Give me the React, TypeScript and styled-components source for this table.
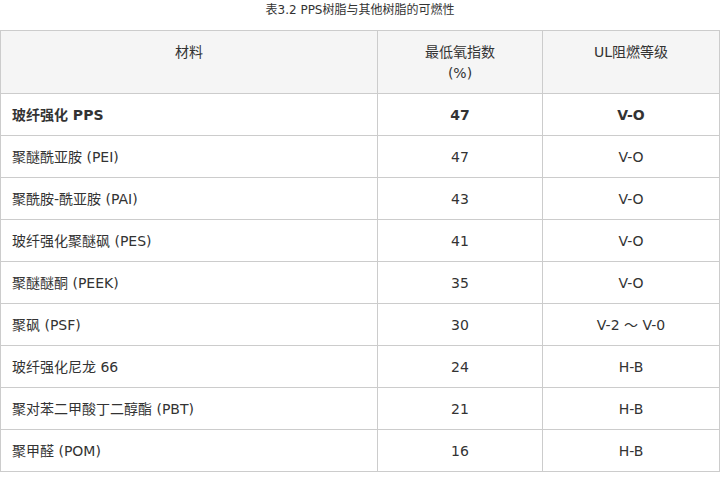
import React from "react";
import styled, { createGlobalStyle } from "styled-components";

const GlobalStyle = createGlobalStyle`
  body {
    margin: 0;
    background: #fff;
    font-family: "DejaVu Sans", "Noto Sans CJK SC", sans-serif;
    color: #333;
  }
`;

interface Row {
  name: string;
  oxygen: string;
  grade: string;
  strong?: boolean;
}

const rows: Row[] = [
  { name: "玻纤强化 PPS", oxygen: "47", grade: "V-O", strong: true },
  { name: "聚醚酰亚胺 (PEI)", oxygen: "47", grade: "V-O" },
  { name: "聚酰胺-酰亚胺 (PAI)", oxygen: "43", grade: "V-O" },
  { name: "玻纤强化聚醚砜 (PES)", oxygen: "41", grade: "V-O" },
  { name: "聚醚醚酮 (PEEK)", oxygen: "35", grade: "V-O" },
  { name: "聚砜 (PSF)", oxygen: "30", grade: "V-2 ～ V-0" },
  { name: "玻纤强化尼龙 66", oxygen: "24", grade: "H-B" },
  { name: "聚对苯二甲酸丁二醇酯 (PBT)", oxygen: "21", grade: "H-B" },
  { name: "聚甲醛 (POM)", oxygen: "16", grade: "H-B" },
];

function App() {
  return (
    <Page>
      <GlobalStyle />
      <Caption>表3.2 PPS树脂与其他树脂的可燃性</Caption>
      <Table>
        <colgroup>
          <col style={{ width: 377 }} />
          <col style={{ width: 165 }} />
          <col style={{ width: 177 }} />
        </colgroup>
        <thead>
          <tr>
            <HeadCell>材料</HeadCell>
            <HeadCell>
              最低氧指数
              <br />
              (%)
            </HeadCell>
            <HeadCell>UL阻燃等级</HeadCell>
          </tr>
        </thead>
        <tbody>
          {rows.map((r) => (
            <tr key={r.name}>
              <Cell $strong={r.strong}>{r.name}</Cell>
              <Cell $center $strong={r.strong}>
                {r.oxygen}
              </Cell>
              <Cell $center $strong={r.strong}>
                {r.grade}
              </Cell>
            </tr>
          ))}
        </tbody>
      </Table>
    </Page>
  );
}

const Page = styled.div`
  width: 720px;
`;

const Caption = styled.div`
  height: 30px;
  padding-top: 1px;
  box-sizing: border-box;
  text-align: center;
  font-size: 12px;
  line-height: 18px;
  color: #333;
`;

const Table = styled.table`
  width: 720px;
  border-collapse: collapse;
  table-layout: fixed;
  font-size: 14px;
  line-height: 21px;
`;

const HeadCell = styled.th`
  background: #f5f5f5;
  border: 1px solid #ccc;
  padding: 11px 11px 9px;
  font-weight: normal;
  text-align: center;
  vertical-align: top;
`;

const Cell = styled.td<{ $center?: boolean; $strong?: boolean }>`
  border: 1px solid #ccc;
  padding: 11px 11px 9px;
  text-align: ${(p) => (p.$center ? "center" : "left")};
  font-weight: ${(p) => (p.$strong ? "bold" : "normal")};
  white-space: nowrap;
`;

export default App;
